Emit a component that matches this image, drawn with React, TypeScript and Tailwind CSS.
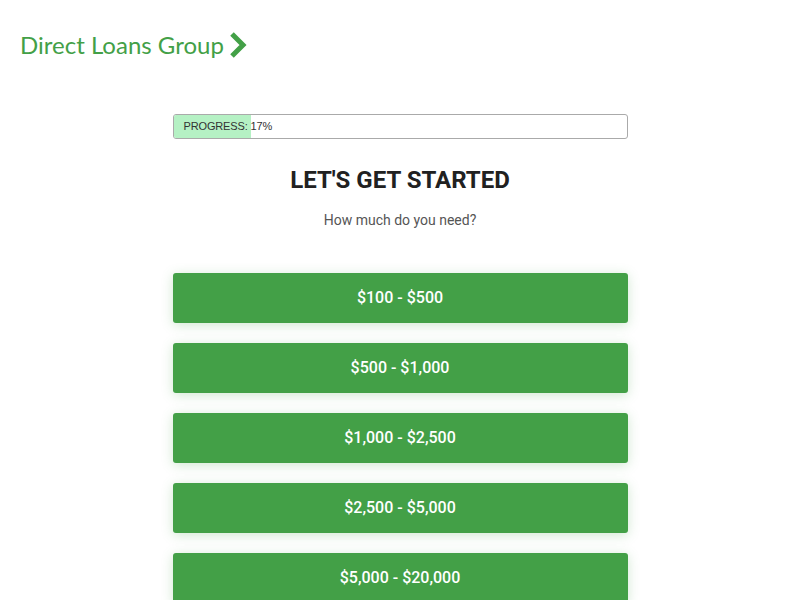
import React from "react";

const options = ["$100 - $500", "$500 - $1,000", "$1,000 - $2,500", "$2,500 - $5,000", "$5,000 - $20,000"];

export default function App() {
  return (
    <div className="min-h-[600px] bg-white">
      <header className="flex items-center px-5 pt-[30px] pb-[30px]">
        <span className="text-[24px] leading-[30px] text-[#43a047]" style={{ fontFamily: "Lato, sans-serif" }}>
          Direct Loans Group
        </span>
        <svg width="20" height="26" viewBox="0 0 20 26" className="ml-[5px]">
          <path d="M3 2 L14 13 L3 24" fill="none" stroke="#43a047" strokeWidth="5" strokeLinejoin="miter" />
        </svg>
      </header>
      <main className="mx-auto w-[455px] pt-[24px]" style={{ fontFamily: "Roboto, sans-serif" }}>
        <div className="relative h-[25px] rounded-[3px] border border-[#aaaaaa] overflow-hidden">
          <div className="h-full w-[17%] bg-[#b5f1c4]" />
          <span
            className="absolute left-[10px] top-0 leading-[23px] text-[11px] text-[#333] tracking-[-0.15px]"
            style={{ fontFamily: "'Liberation Sans', Arial, sans-serif" }}
          >
            PROGRESS: 17%
          </span>
        </div>
        <h1 className="mt-[25px] text-center text-[24px] leading-[32px] font-bold text-[#212121]">LET'S GET STARTED</h1>
        <p className="mt-[14px] text-center text-[14px] leading-[20px] text-[#555]">How much do you need?</p>
        <div className="mt-[43px] flex flex-col gap-[20px]">
          {options.map((o) => (
            <button
              key={o}
              className="h-[50px] w-full rounded-[3px] bg-[#43a047] text-white text-[16px] font-medium shadow-[0_2px_12px_rgba(67,160,71,0.25)]"
            >
              {o}
            </button>
          ))}
        </div>
      </main>
    </div>
  );
}
